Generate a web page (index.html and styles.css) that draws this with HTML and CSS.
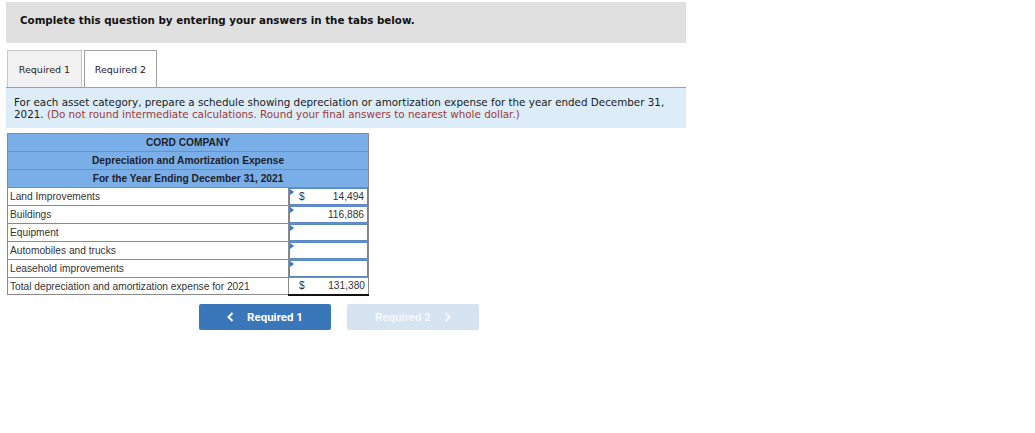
FILE: index.html
```html
<!DOCTYPE html>
<html>
<head>
<meta charset="utf-8">
<link rel="stylesheet" href="styles.css">
</head>
<body>
<div class="wrap">
  <div class="banner">Complete this question by entering your answers in the tabs below.</div>
  <div class="tabs">
    <div class="tab">Required 1</div>
    <div class="tab active">Required 2</div>
  </div>
  <div class="instr">For each asset category, prepare a schedule showing depreciation or amortization expense for the year ended December 31, 2021. <span class="note">(Do not round intermediate calculations. Round your final answers to nearest whole dollar.)</span></div>
  <table class="sched">
    <tr class="hd"><td colspan="2">CORD COMPANY</td></tr>
    <tr class="hd"><td colspan="2">Depreciation and Amortization Expense</td></tr>
    <tr class="hd"><td colspan="2">For the Year Ending December 31, 2021</td></tr>
    <tr><td class="lbl">Land Improvements</td><td class="val"><div class="inp"><span class="flag"></span><span class="cur">$</span><span class="amt">14,494</span></div></td></tr>
    <tr><td class="lbl">Buildings</td><td class="val"><div class="inp"><span class="flag"></span><span class="cur"></span><span class="amt">116,886</span></div></td></tr>
    <tr><td class="lbl">Equipment</td><td class="val"><div class="inp"><span class="flag"></span><span class="cur"></span><span class="amt"></span></div></td></tr>
    <tr><td class="lbl">Automobiles and trucks</td><td class="val"><div class="inp"><span class="flag"></span><span class="cur"></span><span class="amt"></span></div></td></tr>
    <tr><td class="lbl">Leasehold improvements</td><td class="val"><div class="inp"><span class="flag"></span><span class="cur"></span><span class="amt"></span></div></td></tr>
    <tr class="tot"><td class="lbl">Total depreciation and amortization expense for 2021</td><td class="val"><div class="totv"><span class="cur">$</span><span class="amt">131,380</span></div></td></tr>
  </table>
  <div class="nav">
    <div class="btn prev"><svg class="chev left" width="7" height="10" viewBox="0 0 7 10"><polyline points="5.5,1 1.5,5 5.5,9" fill="none" stroke="currentColor" stroke-width="2"/></svg>Required 1</div>
    <div class="btn next">Required 2<svg class="chev right" width="7" height="10" viewBox="0 0 7 10"><polyline points="1.5,1 5.5,5 1.5,9" fill="none" stroke="currentColor" stroke-width="2"/></svg></div>
  </div>
</div>
</body>
</html>
```
FILE: styles.css
```css
* { box-sizing: border-box; }
body { margin: 0; background: #fff; font-family: Verdana, "DejaVu Sans", sans-serif; }
.wrap { padding: 2px 0 0 6px; width: 686px; }
.banner {
  background: #e0e0e0; height: 41px; padding: 12px 0 0 14px;
  font-size: 10.3px; font-weight: bold; color: #111;
}
.tabs { display: flex; gap: 2px; margin-top: 7px; padding-left: 1px; height: 37px; }
.tab {
  width: 75px; height: 37px; border: 1px solid #c6c6c6; border-bottom: none;
  background: #f2f2f2; font-size: 9.5px; color: #222;
  display: flex; align-items: center; justify-content: center;
}
.tab.active { width: 73px; background: #fff; border-color: #a0a0a0; color: #2a1440; }
.instr {
  background: #dcecf9; border-top: 1px solid #a0a0a0; height: 41px;
  padding: 8px 0 0 8px; font-size: 10.35px; line-height: 12px; color: #1a1a1a;
}
.note { color: #9b3a3a; }
.sched {
  margin: 5px 0 0 1px; border-collapse: collapse; width: 362px;
  font-family: Arial, "Liberation Sans", sans-serif; font-size: 10.2px; color: #333;
}
.sched td { height: 18px; padding: 0; border: 1px solid #8a8a8a; }
.hd td { background: #7aaee8; text-align: center; font-weight: bold; color: #1e1e28; font-size: 10.2px; }
.lbl { padding-left: 2px !important; }
.val { width: 80px; padding: 0 !important; }
.inp {
  position: relative; height: 17px; border: 1px solid #5d87c4;
  display: flex; align-items: center; padding: 0 3px 0 9px;
}
.flag {
  position: absolute; left: 0; top: 0; width: 0; height: 0;
  border-top: 3px solid transparent; border-bottom: 3px solid transparent;
  border-left: 4px solid #3b78c8;
}
.cur { width: 10px; }
.amt { flex: 1; text-align: right; }
.tot td { height: 17px; }
.tot .val { border-top: 1px solid #111; border-bottom: 2px solid #111; }
.totv { display: flex; align-items: center; padding: 0 3px 0 10px; }
.nav { display: flex; gap: 16px; margin: 8px 0 0 193px; }
.btn {
  width: 132px; height: 26px; border-radius: 2px;
  font-family: Roboto, "Liberation Sans", sans-serif; font-weight: bold; font-size: 11.5px; color: #fff;
  display: flex; align-items: center; justify-content: center;
}
.prev { background: #3a76ba; }
.next { background: #d6e3f1; color: #f4f7fb; }
.chev { display: block; }
.chev.left { margin-right: 13px; }
.chev.right { margin-left: 13px; }
```
